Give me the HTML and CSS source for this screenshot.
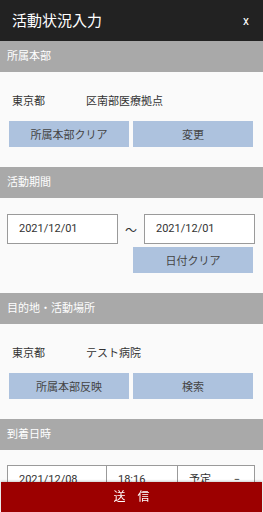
FILE: index.html
```html
<!DOCTYPE html>
<html lang="ja">
<head>
  <meta charset="UTF-8" />
  <meta name="viewport" content="width=device-width, initial-scale=1.0" />
  <title>活動状況入力</title>
  <link rel="stylesheet" href="styles.css">
</head>
<body>
  <header class="topbar">
    <h1>活動状況入力</h1>
    <span class="close">x</span>
  </header>

  <section>
    <div class="sec-head">所属本部</div>
    <div class="sec-body">
      <div class="info">
        <span class="pref">東京都</span>
        <span>区南部医療拠点</span>
      </div>
      <div class="btn-row">
        <button>所属本部クリア</button>
        <button>変更</button>
      </div>
    </div>
  </section>

  <section>
    <div class="sec-head">活動期間</div>
    <div class="sec-body period">
      <div class="date-row">
        <div class="field">2021/12/01</div>
        <span class="tilde">〜</span>
        <div class="field">2021/12/01</div>
      </div>
      <div class="btn-row single">
        <button>日付クリア</button>
      </div>
    </div>
  </section>

  <section>
    <div class="sec-head">目的地・活動場所</div>
    <div class="sec-body">
      <div class="info">
        <span class="pref">東京都</span>
        <span>テスト病院</span>
      </div>
      <div class="btn-row">
        <button>所属本部反映</button>
        <button>検索</button>
      </div>
    </div>
  </section>

  <section>
    <div class="sec-head">到着日時</div>
    <div class="sec-body arrival">
      <div class="arrive-row">
        <div class="field a-date">2021/12/08</div>
        <div class="field a-time">18:16</div>
        <div class="field a-kind">予定<span class="arrow">−</span></div>
      </div>
    </div>
  </section>

  <footer class="submit">送　信</footer>
</body>
</html>
```

FILE: styles.css
```css
:root {
  --bg-color: #fafafa;
  --bar-color: #222222;
  --head-color: #a9a9a9;
  --btn-color: #adc2de;
  --text-color: #333333;
  --send-color: #9c0000;
}

* {
  margin: 0;
  padding: 0;
  box-sizing: border-box;
  font-family: Roboto, "Noto Sans CJK JP", sans-serif;
}

body {
  width: 263px;
  background-color: var(--bg-color);
  color: var(--text-color);
  font-size: 11px;
}

.topbar {
  height: 41px;
  background: var(--bar-color);
  color: #ffffff;
  display: flex;
  align-items: center;
  justify-content: space-between;
  padding: 0 14px 0 12px;
}

.topbar h1 {
  font-size: 15px;
  font-weight: normal;
  line-height: 20px;
}

.close {
  font-size: 12px;
}

.sec-head {
  height: 31px;
  background: var(--head-color);
  color: #ffffff;
  font-size: 11px;
  line-height: 31px;
  padding-left: 7px;
}

.sec-body {
  padding: 22px 10px 20px 9px;
}

.info {
  display: flex;
  line-height: 16px;
  padding-left: 3px;
  margin-bottom: 11px;
}

.pref {
  width: 74px;
}

.btn-row {
  display: flex;
  gap: 4px;
}

.btn-row button {
  flex: 1;
  height: 26px;
  border: none;
  background: var(--btn-color);
  color: #444444;
  font-size: 11px;
}

.btn-row.single {
  padding: 0 2px 0 126px;
  margin-top: 3px;
}

.period {
  padding: 16px 8px 20px 7px;
}

.date-row {
  display: flex;
  align-items: center;
}

.field {
  height: 30px;
  border: 1px solid #9a9a9a;
  background: #ffffff;
  line-height: 28px;
  padding-left: 11px;
  font-size: 11px;
}

.date-row .field {
  width: 111px;
}

.tilde {
  width: 26px;
  text-align: center;
  font-size: 12px;
}

.arrival {
  padding: 15px 8px 20px 7px;
}

.arrive-row {
  display: flex;
}

.a-date {
  width: 100px;
}

.a-time {
  width: 71px;
  border-left: none;
}

.a-kind {
  flex: 1;
  border-left: none;
  display: flex;
  justify-content: space-between;
  padding-right: 14px;
}

.submit {
  position: fixed;
  left: 1px;
  right: 1px;
  bottom: 0;
  height: 30px;
  background: var(--send-color);
  color: #ffffff;
  text-align: center;
  line-height: 30px;
  font-size: 12px;
  box-shadow: 0 -1px 2px rgba(0, 0, 0, 0.2);
}
```
